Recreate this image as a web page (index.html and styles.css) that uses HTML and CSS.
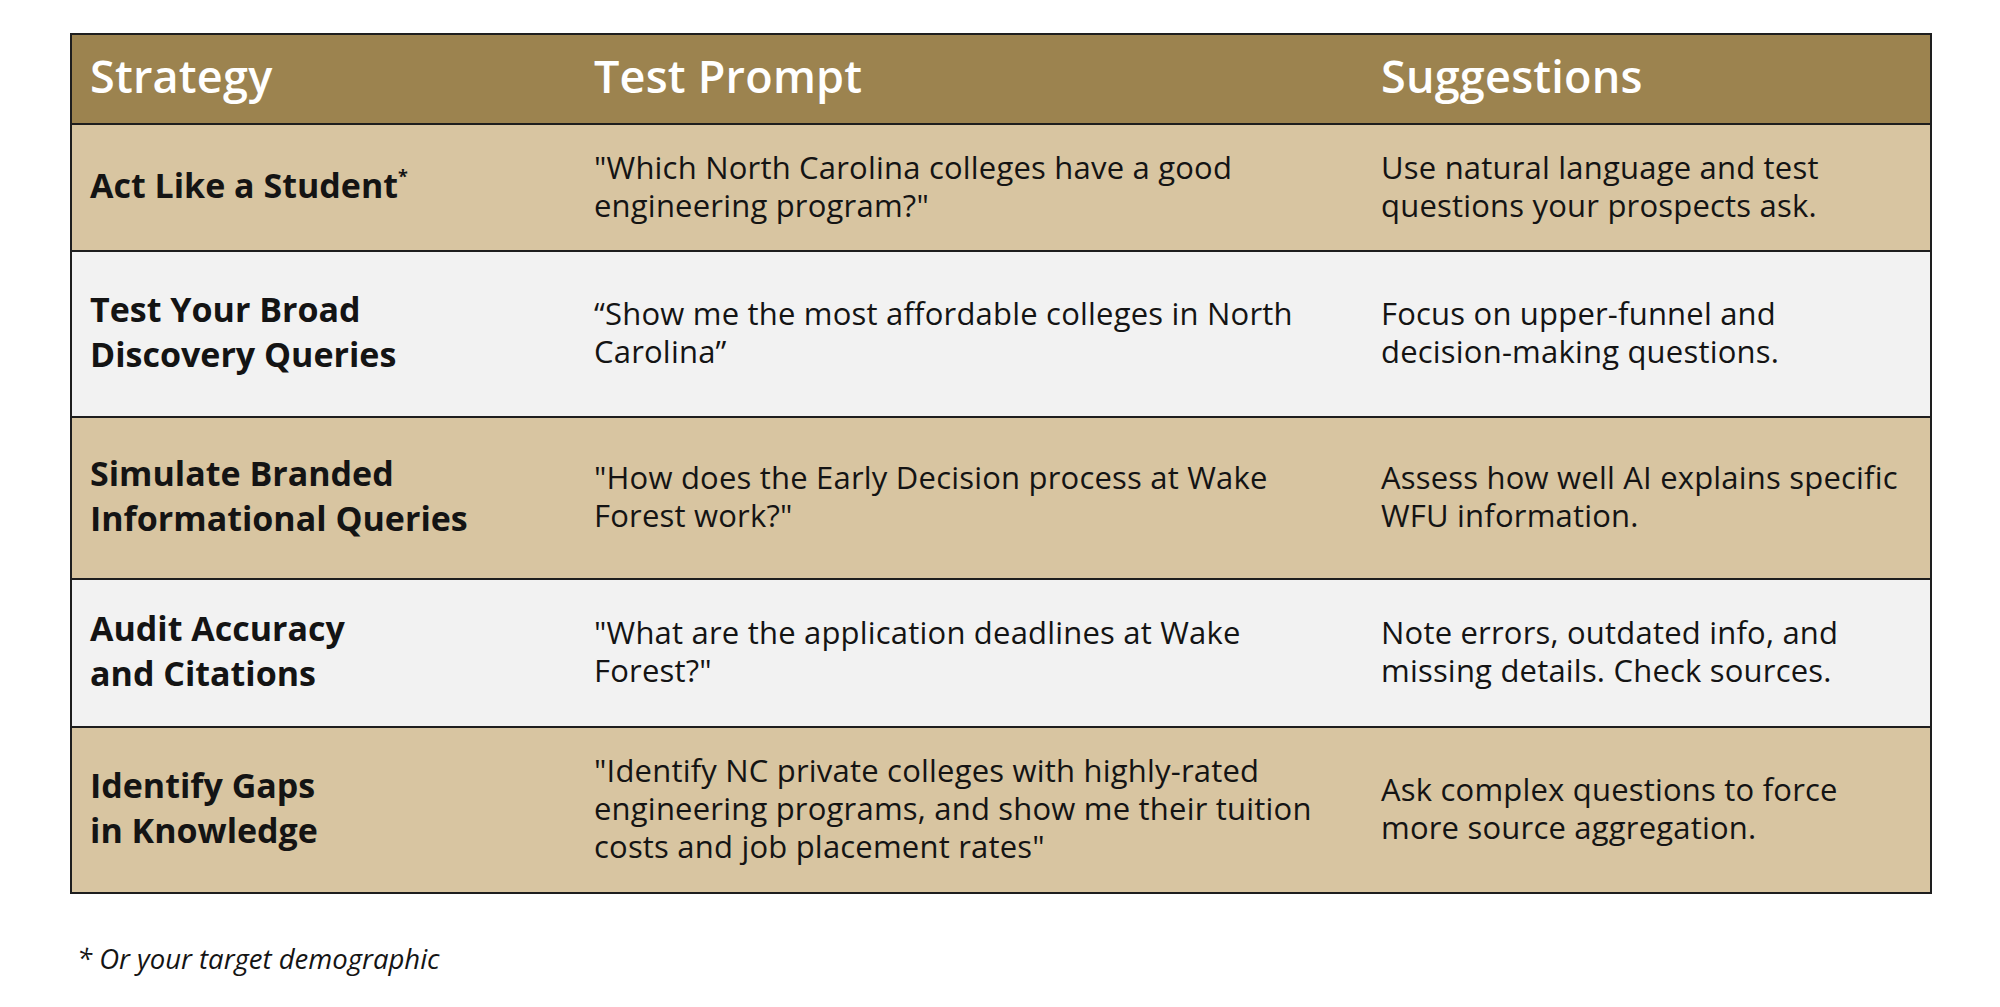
FILE: index.html
```html
<!DOCTYPE html>
<html lang="en">
<head>
<meta charset="utf-8">
<title>AI Search Testing Strategies</title>
<link rel="stylesheet" href="styles.css">
</head>
<body>
<main class="page">
  <table class="grid">
    <colgroup>
      <col class="c1"><col class="c2"><col class="c3">
    </colgroup>
    <thead>
      <tr class="head">
        <th>Strategy</th>
        <th>Test Prompt</th>
        <th>Suggestions</th>
      </tr>
    </thead>
    <tbody>
      <tr class="tan r1">
        <td class="name">Act Like a Student<sup>*</sup></td>
        <td>"Which North Carolina colleges have a good<br>engineering program?"</td>
        <td>Use natural language and test<br>questions your prospects ask.</td>
      </tr>
      <tr class="grey r2">
        <td class="name">Test Your Broad<br>Discovery Queries</td>
        <td>“Show me the most affordable colleges in North<br>Carolina”</td>
        <td>Focus on upper-funnel and<br>decision-making questions.</td>
      </tr>
      <tr class="tan r3">
        <td class="name">Simulate Branded<br>Informational Queries</td>
        <td>"How does the Early Decision process at Wake<br>Forest work?"</td>
        <td>Assess how well AI explains specific<br>WFU information.</td>
      </tr>
      <tr class="grey r4">
        <td class="name">Audit Accuracy<br>and Citations</td>
        <td>"What are the application deadlines at Wake<br>Forest?"</td>
        <td>Note errors, outdated info, and<br>missing details. Check sources.</td>
      </tr>
      <tr class="tan r5">
        <td class="name">Identify Gaps<br>in Knowledge</td>
        <td>"Identify NC private colleges with highly-rated<br>engineering programs, and show me their tuition<br>costs and job placement rates"</td>
        <td>Ask complex questions to force<br>more source aggregation.</td>
      </tr>
    </tbody>
  </table>
  <p class="note">* Or your target demographic</p>
</main>
</body>
</html>
```

FILE: styles.css
```css
html, body {
  margin: 0;
  padding: 0;
  background: #ffffff;
}
body {
  font-family: "Open Sans", "Noto Sans", "Liberation Sans", sans-serif;
  color: #141414;
}
.page {
  padding: 33px 70px 0 70px;
}
.grid {
  width: 1860px;
  border-collapse: collapse;
  border: 2px solid #1e1e1e;
  table-layout: fixed;
}
.c1 { width: 505px; }
.c2 { width: 787px; }
.c3 { width: 568px; }
.grid th,
.grid td {
  text-align: left;
  vertical-align: middle;
  padding: 0 10px 0 18px;
  white-space: nowrap;
}
.grid tbody td {
  border-top: 2px solid #1e1e1e;
}
.head th {
  background: #9c834f;
  color: #ffffff;
  font-size: 45px;
  line-height: 56px;
  font-weight: 600;
  height: 82px;
  letter-spacing: 0.2px;
  padding-bottom: 6px;
}
.tan td { background: #d8c5a1; }
.grey td { background: #f2f2f2; }
.grid td {
  font-size: 31px;
  line-height: 38px;
  font-weight: 400;
  letter-spacing: 0.2px;
  padding-bottom: 4px;
}
.grid td.name {
  font-size: 34px;
  line-height: 45px;
  font-weight: 700;
  letter-spacing: 0;
}
.name sup {
  font-size: 18px;
  line-height: 0;
  vertical-align: 15px;
}
.grid td:last-child { padding-right: 0; }
.r1 td { height: 121px; }
.r2 td { height: 160px; }
.r3 td { height: 156px; }
.r4 td { height: 142px; }
.r5 td { height: 160px; }
.note {
  margin: 46px 0 0 7px;
  font-size: 27.5px;
  font-style: italic;
  color: #141414;
}
```
